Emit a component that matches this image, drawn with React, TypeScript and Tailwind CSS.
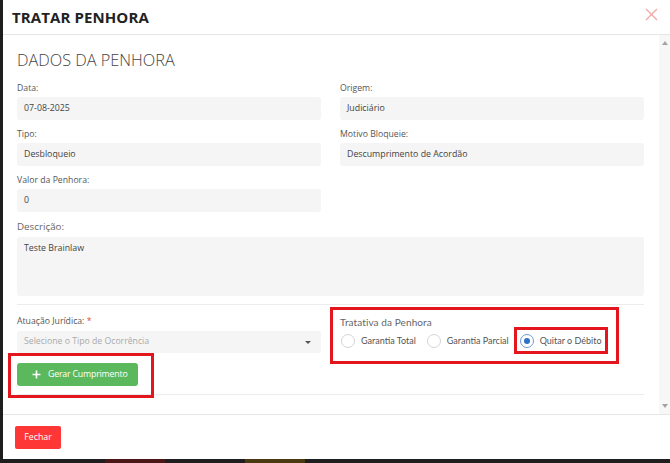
import React from 'react';

const Field: React.FC<{ label: string; value: string }> = ({ label, value }) => (
  <div>
    <div className="text-[8.7px] leading-[12px] text-[#555] mb-[3px]">{label}</div>
    <div className="h-[23px] bg-[#f5f5f5] rounded-[3px] pl-[7px] flex items-center text-[8.8px] text-[#444]">
      {value}
    </div>
  </div>
);

const Radio: React.FC<{ checked?: boolean }> = ({ checked }) => (
  <span
    className={`w-[14px] h-[14px] rounded-full border bg-white flex items-center justify-center shrink-0 ${
      checked ? 'border-[#6f9bd6]' : 'border-[#d4d4d4]'
    }`}
  >
    {checked && <span className="w-[6px] h-[6px] rounded-full bg-[#2f72c4]" />}
  </span>
);

const App: React.FC = () => {
  return (
    <div className="w-[670px] h-[463px] bg-[#1e1e1e] overflow-hidden flex flex-col font-['Open_Sans',sans-serif]">
      <div className="ml-[3px] h-[459px] bg-white flex flex-col">
        {/* header */}
        <div className="h-[35px] border-b border-[#e6e6e6] flex items-center justify-between pl-[9px] pr-[12px] shrink-0">
          <h1 className="text-[15px] font-bold text-[#222] tracking-[0.1px]">TRATAR PENHORA</h1>
          <svg width="13" height="13" viewBox="0 0 13 13" className="-mt-[6px]">
            <path d="M1 1L12 12M12 1L1 12" stroke="#f4a3a3" strokeWidth="1.2" />
          </svg>
        </div>

        {/* body */}
        <div className="flex-1 flex min-h-0">
          <div className="flex-1 overflow-hidden pl-[14px] pr-[15px] pt-[15px]">
            <h2 className="text-[16.3px] leading-[20px] font-light text-[#444]">DADOS DA PENHORA</h2>

            <div className="grid grid-cols-2 gap-x-[19px] gap-y-[8px] mt-[12px]">
              <Field label="Data:" value="07-08-2025" />
              <Field label="Origem:" value="Judiciário" />
              <Field label="Tipo:" value="Desbloqueio" />
              <Field label="Motivo Bloqueie:" value="Descumprimento de Acordão" />
              <Field label="Valor da Penhora:" value="0" />
            </div>

            <div className="mt-[8px]">
              <div className="text-[9.8px] leading-[14px] text-[#666] mb-[3px]">Descrição:</div>
              <div className="h-[59px] bg-[#f5f5f5] rounded-[3px] pl-[7px] pt-[5px] text-[8.8px] text-[#444]">
                Teste Brainlaw
              </div>
            </div>

            <div className="mt-[8px] border-t border-[#ececec]" />

            <div className="grid grid-cols-2 gap-x-[19px]">
              {/* left column */}
              <div className="pt-[10px]">
                <div className="text-[8.7px] leading-[12px] text-[#555] mb-[4px]">
                  Atuação Jurídica: <span className="text-[#e74c3c]">*</span>
                </div>
                <div className="h-[22px] bg-[#f5f5f5] rounded-[3px] pl-[7px] pr-[10px] flex items-center justify-between text-[8.7px] text-[#aaa]">
                  <span>Selecione o Tipo de Ocorrência</span>
                  <span className="w-0 h-0 border-l-[3px] border-r-[3px] border-t-[3px] border-l-transparent border-r-transparent border-t-[#555]" />
                </div>
                <div className="relative z-10 -ml-[9px] -mb-[4px] w-[146px] border-[3px] border-[#e3161d] pl-[6px] pt-[7px] pb-[9px]">
                  <button className="w-[121px] h-[23px] bg-[#5cb85c] rounded-[3px] flex items-center pl-[15px] text-white text-[8.8px] tracking-[-0.2px] whitespace-nowrap">
                    <svg width="9" height="9" viewBox="0 0 9 9" className="mr-[7px]">
                      <path d="M4.5 0.5V8.5M0.5 4.5H8.5" stroke="white" strokeWidth="1.6" />
                    </svg>
                    Gerar Cumprimento
                  </button>
                </div>
              </div>

              {/* right column */}
              <div>
                <div className="-ml-[10px] mt-[2px] w-[289px] h-[57px] border-[3px] border-[#e3161d] pl-[7px] font-['Lato',sans-serif]">
                  <div className="text-[10px] leading-[12px] text-[#666] mt-[6px] whitespace-nowrap tracking-[0.1px]">
                    Tratativa da Penhora
                  </div>
                  <div className="flex items-center -mt-[1px] text-[9px] text-[#555] whitespace-nowrap">
                    <div className="flex items-center h-[27px] pl-[1px] shrink-0">
                      <Radio />
                      <span className="ml-[6px]">Garantia Total</span>
                    </div>
                    <div className="flex items-center h-[27px] ml-[11px] shrink-0">
                      <Radio />
                      <span className="ml-[6px]">Garantia Parcial</span>
                    </div>
                    <div className="flex items-center h-[27px] ml-[5px] border-[3px] border-[#e3161d] pl-[3px] pr-[3px] shrink-0">
                      <Radio checked />
                      <span className="ml-[6px]">Quitar o Débito</span>
                    </div>
                  </div>
                </div>
              </div>
            </div>

            <div className="border-t border-[#ececec]" />
          </div>

          {/* scrollbar */}
          <div className="w-[11px] bg-[#f7f7f7] flex flex-col items-center justify-between pt-[6px] pb-[6px] shrink-0">
            <span className="w-0 h-0 border-l-[3.5px] border-r-[3.5px] border-b-[4px] border-l-transparent border-r-transparent border-b-[#a3a3a3]" />
            <span className="w-0 h-0 border-l-[3.5px] border-r-[3.5px] border-t-[4px] border-l-transparent border-r-transparent border-t-[#a3a3a3]" />
          </div>
        </div>

        {/* footer */}
        <div className="h-[45px] border-t border-[#e6e6e6] pl-[12px] pt-[7px] shrink-0">
          <button className="w-[46px] h-[23px] bg-[#ff3636] rounded-[2px] text-white text-[8.8px]">Fechar</button>
        </div>
      </div>
      <div className="flex-1 ml-[3px] flex">
        <span className="ml-[102px] w-[60px] bg-[#4a1616]" />
        <span className="ml-[80px] w-[60px] bg-[#4a3a12]" />
      </div>
    </div>
  );
};

export default App;
